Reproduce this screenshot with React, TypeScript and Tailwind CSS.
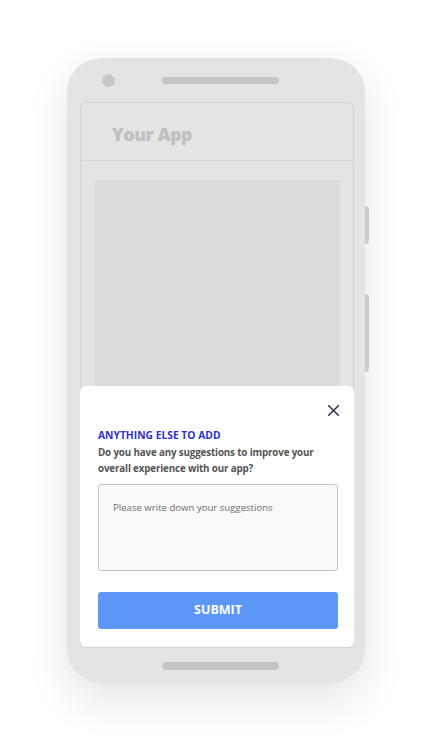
export default function App() {
  return (
    <div className="min-h-[754px] w-full bg-white pl-[67px] pt-[58px] font-['Open_Sans',sans-serif]">
      <div className="relative h-[625px] w-[298px] rounded-[34px] bg-[#e4e4e4] shadow-[0_16px_44px_rgba(0,0,0,0.11)]">
        {/* side buttons */}
        <div className="absolute right-[-4px] top-[148px] h-[38px] w-[4px] rounded-r-sm bg-[#cbcbcb]" />
        <div className="absolute right-[-4px] top-[236px] h-[78px] w-[4px] rounded-r-sm bg-[#cbcbcb]" />

        {/* top bezel */}
        <div className="flex h-[44px] items-center">
          <div className="ml-[35px] h-[13px] w-[13px] rounded-full bg-[#c6c6c6]" />
          <div className="ml-[47px] h-[7px] w-[117px] rounded-full bg-[#c4c4c4]" />
        </div>

        {/* screen */}
        <div className="relative ml-[13px] h-[546px] w-[274px] rounded-[5px] border border-[#d3d3d3] bg-[#e4e4e4]">
          <div className="flex h-[58px] items-center border-b border-[#d6d6d6] pl-[31px] pt-[5px]">
            <span className="text-[17.5px] font-extrabold tracking-[-0.3px] text-[#bfbfbf]">Your App</span>
          </div>
          <div className="px-[13px] pt-[19px]">
            <div className="h-[220px] w-full bg-[#dcdcdc]" />
          </div>

          {/* feedback sheet */}
          <div className="absolute bottom-0 left-[-1px] right-[-1px] h-[261px] rounded-[6px] bg-white pl-[18px] pr-[16px] pt-[19px]">
            <div className="flex justify-end">
              <svg width="11" height="11" viewBox="0 0 11 11" className="mr-[-1px]">
                <path d="M0.7 0.7L10.3 10.3M10.3 0.7L0.7 10.3" stroke="#1e2947" strokeWidth="1.4" strokeLinecap="round" />
              </svg>
            </div>
            <p className="mt-[12px] text-[10.3px] font-bold uppercase leading-[14px] text-[#2d32c8]">
              Anything else to add
            </p>
            <p className="mt-[3px] text-[9.8px] font-bold leading-[15.5px] tracking-[-0.15px] text-[#545454]">
              Do you have any suggestions to improve your overall experience with our app?
            </p>
            <div className="mt-[8px] h-[87px] w-full rounded-[3px] border border-[#c6c6c6] bg-[#f9f9f9] px-[14px] pt-[8px]">
              <span className="text-[9.6px] leading-[14px] text-[#6e6e6e]">Please write down your suggestions</span>
            </div>
            <button className="mt-[21px] flex h-[37px] w-full items-center justify-center rounded-[3px] bg-[#5c96f7] text-[12.5px] font-bold text-white">
              SUBMIT
            </button>
          </div>
        </div>

        {/* bottom bezel */}
        <div className="flex h-[35px] items-start pt-[14px]">
          <div className="ml-[95px] h-[8px] w-[117px] rounded-full bg-[#c4c4c4]" />
        </div>
      </div>
    </div>
  );
}
